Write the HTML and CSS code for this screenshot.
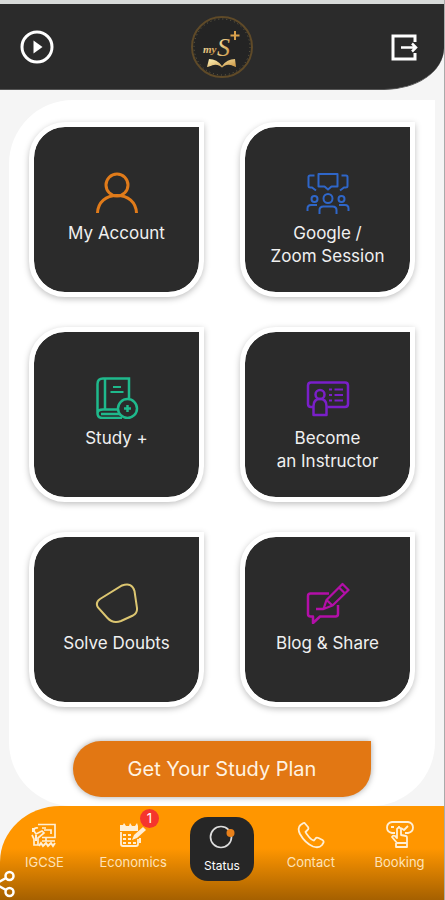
FILE: index.html
```
<!DOCTYPE html>
<html lang="en">
<head>
<meta charset="utf-8">
<meta name="viewport" content="width=device-width, initial-scale=1">
<title>My Study Plus</title>
<link rel="stylesheet" href="styles.css">
</head>
<body>
<div class="app">
	<div class="statusbar"></div>
	<header class="topbar">
		<button class="icon-btn" type="button" aria-label="Play">
			<svg width="34" height="34" viewBox="0 0 34 34"><circle cx="17" cy="17" r="15" fill="none" stroke="#fff" stroke-width="3"/><path d="M13.500 10.500v13l9-6.500z" fill="#fff"/></svg>
		</button>
		<svg class="logo" width="62" height="64" viewBox="0 0 62 64">
			<defs>
				<linearGradient id="gold" x1="0" y1="0" x2="1" y2="1">
					<stop offset="0" stop-color="#fff3b8"/>
					<stop offset="1" stop-color="#c58a35"/>
				</linearGradient>
			</defs>
			<circle cx="31" cy="32" r="30" fill="#242424" stroke="#5f4a28" stroke-width="2"/>
			<circle cx="31" cy="32" r="28" fill="none" stroke="#6b6348" stroke-width="1" stroke-dasharray="1 3"/>
			<text class="logo-my" x="12" y="38" fill="url(#gold)">my</text>
			<text class="logo-s" x="26" y="41" fill="url(#gold)">S</text>
			<path d="M44 16v9M39.500 20.500h9" stroke="#d9a04c" stroke-width="2"/>
			<path d="M18 44q8 0 13 7q5-7 13-7l1 8q-9-3-14 2q-5-5-15-2z" fill="url(#gold)"/>
			<path d="M19 53q7-4 12 2q5-6 12-2" fill="none" stroke="#242424" stroke-width="3"/>
		</svg>
		<button class="icon-btn" type="button" aria-label="Log out">
			<svg width="28" height="28" viewBox="0 0 28 28" fill="none" stroke="#fff" stroke-width="3"><path d="M25 9V3H3v23h22v-6"/><path d="M11 14.500h15M22 10.500l4 4-4 4" stroke-width="2.500"/></svg>
		</button>
	</header>

	<main class="panel">
		<div class="cards">
			<a class="card" href="#account">
				<svg width="44" height="42" viewBox="0 0 44 42" fill="none" stroke="#e07b1a" stroke-width="3"><circle cx="22" cy="13" r="11"/><path d="M2.500 41C3 30 11 23.500 22 23.500S41 30 41.500 41"/></svg>
				<span>My Account</span>
			</a>
			<a class="card" href="#session">
				<svg width="44" height="42" viewBox="0 0 44 42" fill="none" stroke="#2f66c8" stroke-width="2">
					<path d="M12.500 2h19v12.500h-6L22 17.500l-3.500-3h-6z" stroke-linejoin="round"/>
					<path d="M8.500 3.500H4Q2.500 3.500 2.500 5v9q0 1.500 2 1.500H6l4 3M35.500 3.500H40q1.500 0 1.500 1.500v9q0 1.500-2 1.500H38l-4 3"/>
					<circle cx="22" cy="26.500" r="4.500"/><circle cx="8.500" cy="27" r="3"/><circle cx="35.500" cy="27" r="3"/>
					<path d="M13.500 42v-4q0-3.500 4-3.500h9q4 0 4 3.500v4M1.500 39v-2.500q0-3.500 3.500-3.500h6M42.500 39v-2.500q0-3.500-3.500-3.500h-6"/>
				</svg>
				<span>Google /<br>Zoom Session</span>
			</a>
			<a class="card" href="#study">
				<svg width="44" height="42" viewBox="0 0 44 42" fill="none" stroke="#1fb98c" stroke-width="2.500">
					<path d="M34 21V1.500H8Q2.500 1.500 2.500 7v29q0 5 5 5H27M10 1.500v31M24 32.500H8q-5.500 0-5.500 4M6 37h19" />
					<path d="M18 10h8M15.500 15h13" stroke-width="2"/>
					<circle cx="32.500" cy="31.500" r="9.500"/><path d="M32.500 28v7M29 31.500h7"/>
				</svg>
				<span>Study +</span>
			</a>
			<a class="card" href="#instructor">
				<svg width="44" height="42" viewBox="0 0 44 42" fill="none" stroke="#7a1fc9" stroke-width="2.500">
					<path d="M7 30H5q-3 0-3-3V8.500Q2 5.500 5 5.500h34q3 0 3 3V27q0 3-3 3H21.500"/>
					<circle cx="14" cy="17.500" r="4.500"/>
					<path d="M7.500 38v-9q0-7 6.500-7t6.500 7v9z" stroke-linejoin="round"/>
					<path d="M28.500 12.500h8.500M28.500 18h8.500M28.500 23.500h8.500M23 12.500h3M23 18h3M23 23.500h3" stroke-width="2"/>
				</svg>
				<span>Become<br>an Instructor</span>
			</a>
			<a class="card" href="#doubts">
				<svg width="44" height="42" viewBox="0 0 44 42" fill="none" stroke="#dcc671" stroke-width="2"><path d="M5 17L27 3.500Q37 0 39.500 9l2.500 17q.5 5-4 7.500L26 39q-8 3-13.500-3L3 25.500Q0 20.500 5 17z"/></svg>
				<span>Solve Doubts</span>
			</a>
			<a class="card" href="#blog">
				<svg width="44" height="42" viewBox="0 0 44 42" fill="none" stroke="#b30fa8" stroke-width="2.500" stroke-linejoin="round">
					<path d="M23 11.500H4.500Q2 11.500 2 14v18q0 2.500 2.500 2.500H7V41l7-6.500h15.500q2.500 0 2.500-2.500v-9"/>
					<path d="M10 27h7.500l3-9L36.500 2l6 6-16 15.500-9 3.500M20.500 18l6 5.500M33 5.500l6 6" stroke-width="2.300"/>
				</svg>
				<span>Blog &amp; Share</span>
			</a>
		</div>
		<button class="plan-btn" type="button">Get Your Study Plan</button>
	</main>

	<nav class="tabs">
		<a class="tab" href="#igcse">
			<svg width="28" height="28" viewBox="0 0 28 28" fill="none" stroke="#ffefd5" stroke-width="1.700">
				<path d="M8 3.500h17v13H12M14 9h7v4M12 7h4M8 7Q4 6 4 10l2 3 6-3 2 2-6 5v7H4v-6l-2-4M16 16v4h5M12 20h13"/>
				<path d="M9 25l2-3 2 3 3-3 2 3 3-3 2 3 2-3M3 7v4M6 14v6" stroke-width="2"/>
			</svg>
			<span>IGCSE</span>
		</a>
		<a class="tab" href="#economics">
			<svg width="28" height="28" viewBox="0 0 28 28" fill="none" stroke="#ffefd5" stroke-width="1.800">
				<path d="M2 11v12q0 2 2 2h13q2 0 2-2v-5"/>
				<path d="M1 4h3l1-2 2 3h3l1-3 2 3h3l2-3 1 3v5H1z" fill="#ffefd5" stroke="none"/>
				<path d="M13 19l2-5 9-8 3 3-9 8z" fill="#ffefd5" stroke="none"/>
				<path d="M4 14h3M9 14h3M4 18h3M9 18h3M4 22h3M9 22h3M14 22h3M21 17v5" stroke-width="2"/>
			</svg>
			<span>Economics</span>
			<b class="badge">1</b>
		</a>
		<a class="tab tab-active" href="#status" aria-current="page">
			<svg width="28" height="28" viewBox="0 0 28 28"><circle cx="13" cy="14" r="10.500" fill="none" stroke="#ddd" stroke-width="1.700"/><circle cx="22.500" cy="10" r="4" fill="#e8801a"/></svg>
			<span>Status</span>
		</a>
		<a class="tab" href="#contact">
			<svg width="28" height="28" viewBox="0 0 28 28" fill="none" stroke="#ffefd5" stroke-width="1.800" stroke-linejoin="round"><path d="M6.500 2L3.500 4Q0 7 3 13q5 9 13 12.500 6 2 9-1.500l1.500-2.500q.5-1.500-1-2.500l-4-2q-2-1-3 .5l-1.500 2q-2 0-5-3.500t-3.500-5l2-2q1.500-1 .5-3L8 2.500q-.5-1-1.500-.5z"/></svg>
			<span>Contact</span>
		</a>
		<a class="tab" href="#booking">
			<svg width="28" height="28" viewBox="0 0 28 28" fill="none" stroke="#ffefd5" stroke-width="1.800" stroke-linejoin="round">
				<path d="M9 12H6Q1 11 1 6.500T6 1h16q5 1 5 5.500T22 12h-3M15 7l3 2 4-4M5 6h3"/>
				<path d="M11 15V8q2-3 4 0v6l5 1q1 0 1 2v5H11l-5-6q1-2 3-1l2 2zM10 22v4h11v-4M13 5v2"/>
			</svg>
			<span>Booking</span>
		</a>
		<button class="share" type="button" aria-label="Share">
			<svg width="16" height="30" viewBox="0 0 16 30" fill="none" stroke="#fff" stroke-width="2.500"><circle cx="9.500" cy="7" r="4"/><circle cx="9.500" cy="23" r="4"/><path d="M6 9l-7 4M6 21l-7-4"/></svg>
		</button>
	</nav>
</div>
</body>
</html>
```
FILE: styles.css
```
* {
	box-sizing: border-box;
}
body {
	margin: 0;
	background: #f5f5f5;
	font-family: Inter, "Open Sans", sans-serif;
}
a {
	color: inherit;
	text-decoration: none;
}
button {
	font-family: inherit;
	border: 0;
	cursor: pointer;
}
svg {
	display: block;
	flex: none;
}
.app {
	min-height: 100vh;
	display: flex;
	flex-direction: column;
	border-right: 1px solid #aaa;
}
.statusbar {
	height: 4px;
	background: #d8dad9;
}

/* header */
.topbar {
	display: flex;
	align-items: center;
	justify-content: space-between;
	height: 86px;
	padding: 0 26px 0 20px;
	background: #2b2b2b;
	border-bottom: 1px solid #555;
	border-bottom-right-radius: 60px 42px;
}
.icon-btn {
	padding: 0;
	background: none;
}
.logo-my {
	font: italic bold 11px "Liberation Serif", serif;
}
.logo-s {
	font: italic 26px "Liberation Serif", serif;
}

/* content */
.panel {
	flex: 1;
	margin: 10px 9px 0;
	padding: 22px 20px 9px;
	background: #fff;
	border-radius: 64px 0 64px 64px;
}
.cards {
	display: grid;
	grid-template-columns: 1fr 1fr;
	gap: 30px 36px;
}
.card {
	aspect-ratio: 1;
	display: flex;
	flex-direction: column;
	align-items: center;
	gap: 8px;
	padding-top: 45px;
	border: 5px solid #fff;
	border-radius: 36px 0 36px 36px;
	background: #2b2b2b;
	background-clip: padding-box;
	box-shadow: 0 2px 6px rgba(0, 0, 0, .25);
	color: #f0f0f0;
	font-size: 17px;
	line-height: 23px;
	text-align: center;
}
.plan-btn {
	display: block;
	width: 77%;
	height: 56px;
	margin: 34px auto 0;
	background: #e27713;
	border-radius: 32px 0 32px 32px;
	box-shadow: 0 0 6px rgba(0, 0, 0, .35);
	color: #fff3e2;
	font-size: 20px;
}

/* bottom tabs */
.tabs {
	position: relative;
	display: grid;
	grid-template-columns: repeat(5, 1fr);
	justify-items: center;
	align-items: start;
	height: 94px;
	padding-top: 11px;
	background: linear-gradient(#ff9600 45%, #a56000);
	border-top-left-radius: 60px 56px;
}
.tab {
	position: relative;
	display: flex;
	flex-direction: column;
	align-items: center;
	gap: 4px;
	padding-top: 4px;
	color: #ffe3b8;
	font-size: 13px;
	line-height: 18px;
}
.tab-active {
	width: 64px;
	height: 64px;
	gap: 6px;
	padding-top: 6px;
	background: #262626;
	border-radius: 18px;
	color: #fff;
	font-size: 12px;
}
.badge {
	position: absolute;
	top: -8px;
	right: 8px;
	width: 19px;
	height: 19px;
	border-radius: 50%;
	background: #f5352d;
	color: #fff;
	font-weight: normal;
	line-height: 19px;
	text-align: center;
}
.share {
	position: absolute;
	left: 0;
	bottom: 1px;
	padding: 0;
	background: none;
}
```
